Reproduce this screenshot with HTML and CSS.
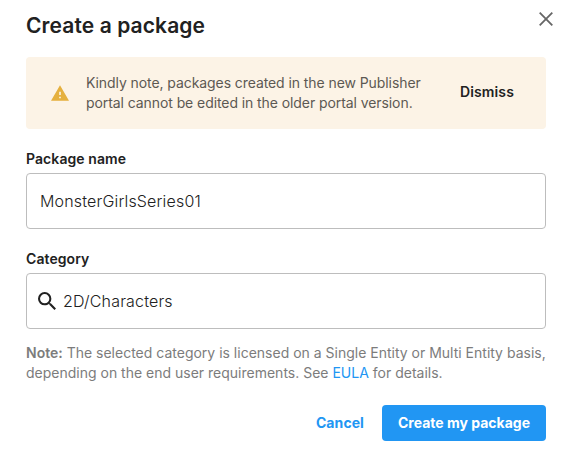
FILE: index.html
```html
<!DOCTYPE html>
<html lang="en">
<head>
<meta charset="utf-8">
<title>Create a package</title>
<link rel="stylesheet" href="styles.css">
</head>
<body>
<main class="dialog">
  <header class="header">
    <h1 class="title">Create a package</h1>
    <button class="close" aria-label="Close"><svg width="14" height="14" viewBox="0 0 14 14"><path d="M.7.7l12.6 12.6M13.3.7L.7 13.3"/></svg></button>
  </header>
  <section class="notice">
    <svg class="warn" width="18" height="16" viewBox="0 0 22 19"><path fill-rule="evenodd" d="M0 19h22L11 0zM12 16h-2v-2h2zm0-4h-2V8h2z"/></svg>
    <p class="notice-text">Kindly note, packages created in the new Publisher<br>portal cannot be edited in the older portal version.</p>
    <button class="dismiss">Dismiss</button>
  </section>
  <label class="label">Package name</label>
  <div class="field name-field"><span class="value">MonsterGirlsSeries01</span></div>
  <label class="label">Category</label>
  <div class="field search-field">
    <svg class="search" width="18" height="18" viewBox="3 3 17.5 17.5"><path d="M15.5 14h-.79l-.28-.27A6.47 6.47 0 0 0 16 9.5 6.5 6.5 0 1 0 9.5 16c1.61 0 3.09-.59 4.23-1.57l.27.28v.79l5 4.99L20.49 19zm-6 0a4.5 4.5 0 1 1 0-9 4.5 4.5 0 0 1 0 9z"/></svg>
    <span class="value">2D/Characters</span>
  </div>
  <p class="note"><b>Note:</b> The selected category is licensed on a Single Entity or Multi Entity basis,<br>depending on the end user requirements. See <a class="link">EULA</a> for details.</p>
  <footer class="actions">
    <button class="cancel">Cancel</button>
    <button class="create">Create my package</button>
  </footer>
</main>
</body>
</html>
```
FILE: styles.css
```css
* { box-sizing: border-box; }
body { margin: 0; background: #fff; color: #212121; font-family: Inter, sans-serif; }
button { border: 0; padding: 0; background: none; font: inherit; color: inherit; letter-spacing: inherit; }
svg { display: block; flex: none; }
.dialog { width: 578px; height: 456px; padding: 10px 32px 0 26px; overflow: hidden; }
.header { display: flex; justify-content: space-between; height: 47px; }
.title { margin: 0; font-size: 21px; line-height: 32px; font-weight: 600; letter-spacing: 0.1px; }
.close { height: 14px; margin: 2px -7px 0 0; }
.close path { stroke: #666; stroke-width: 1.8; fill: none; }
.notice { display: flex; align-items: center; height: 72px; padding: 0 32px 0 25px; background: #fcf3e6; border-radius: 4px; margin-bottom: 20px; }
.warn { fill: #e5b03e; }
.notice-text { margin: 0 0 0 17px; flex: 1; font-size: 14px; line-height: 20px; letter-spacing: -0.08px; color: #5c5953; white-space: nowrap; }
.dismiss { margin-top: -3px; font-size: 14px; font-weight: 600; letter-spacing: 0.14px; }
.label { display: block; height: 24px; font-size: 14px; line-height: 20px; font-weight: 600; letter-spacing: 0.08px; }
.field { display: flex; align-items: center; height: 56px; border: 1px solid #bdbdbd; border-radius: 4px; background: #fff; }
.name-field { padding: 0 13px; margin-bottom: 20px; }
.search-field { padding: 0 11px; }
.search { fill: #212121; margin-right: 7px; }
.value { font-size: 16px; font-weight: 300; letter-spacing: 0.17px; }
.note { margin: 14px 0 0; font-size: 14px; line-height: 20px; color: #7c7c7c; white-space: nowrap; }
.note b { font-weight: 600; }
.link { color: #2196f3; }
.actions { display: flex; justify-content: flex-end; align-items: center; margin-top: 22px; font-size: 14px; font-weight: 700; }
.cancel { color: #2196f3; margin: -2px 18px 0 0; letter-spacing: 0.08px; }
.create { width: 164px; height: 36px; padding-bottom: 1px; border-radius: 4px; background: #2196f3; color: #fff; letter-spacing: 0; }
```
